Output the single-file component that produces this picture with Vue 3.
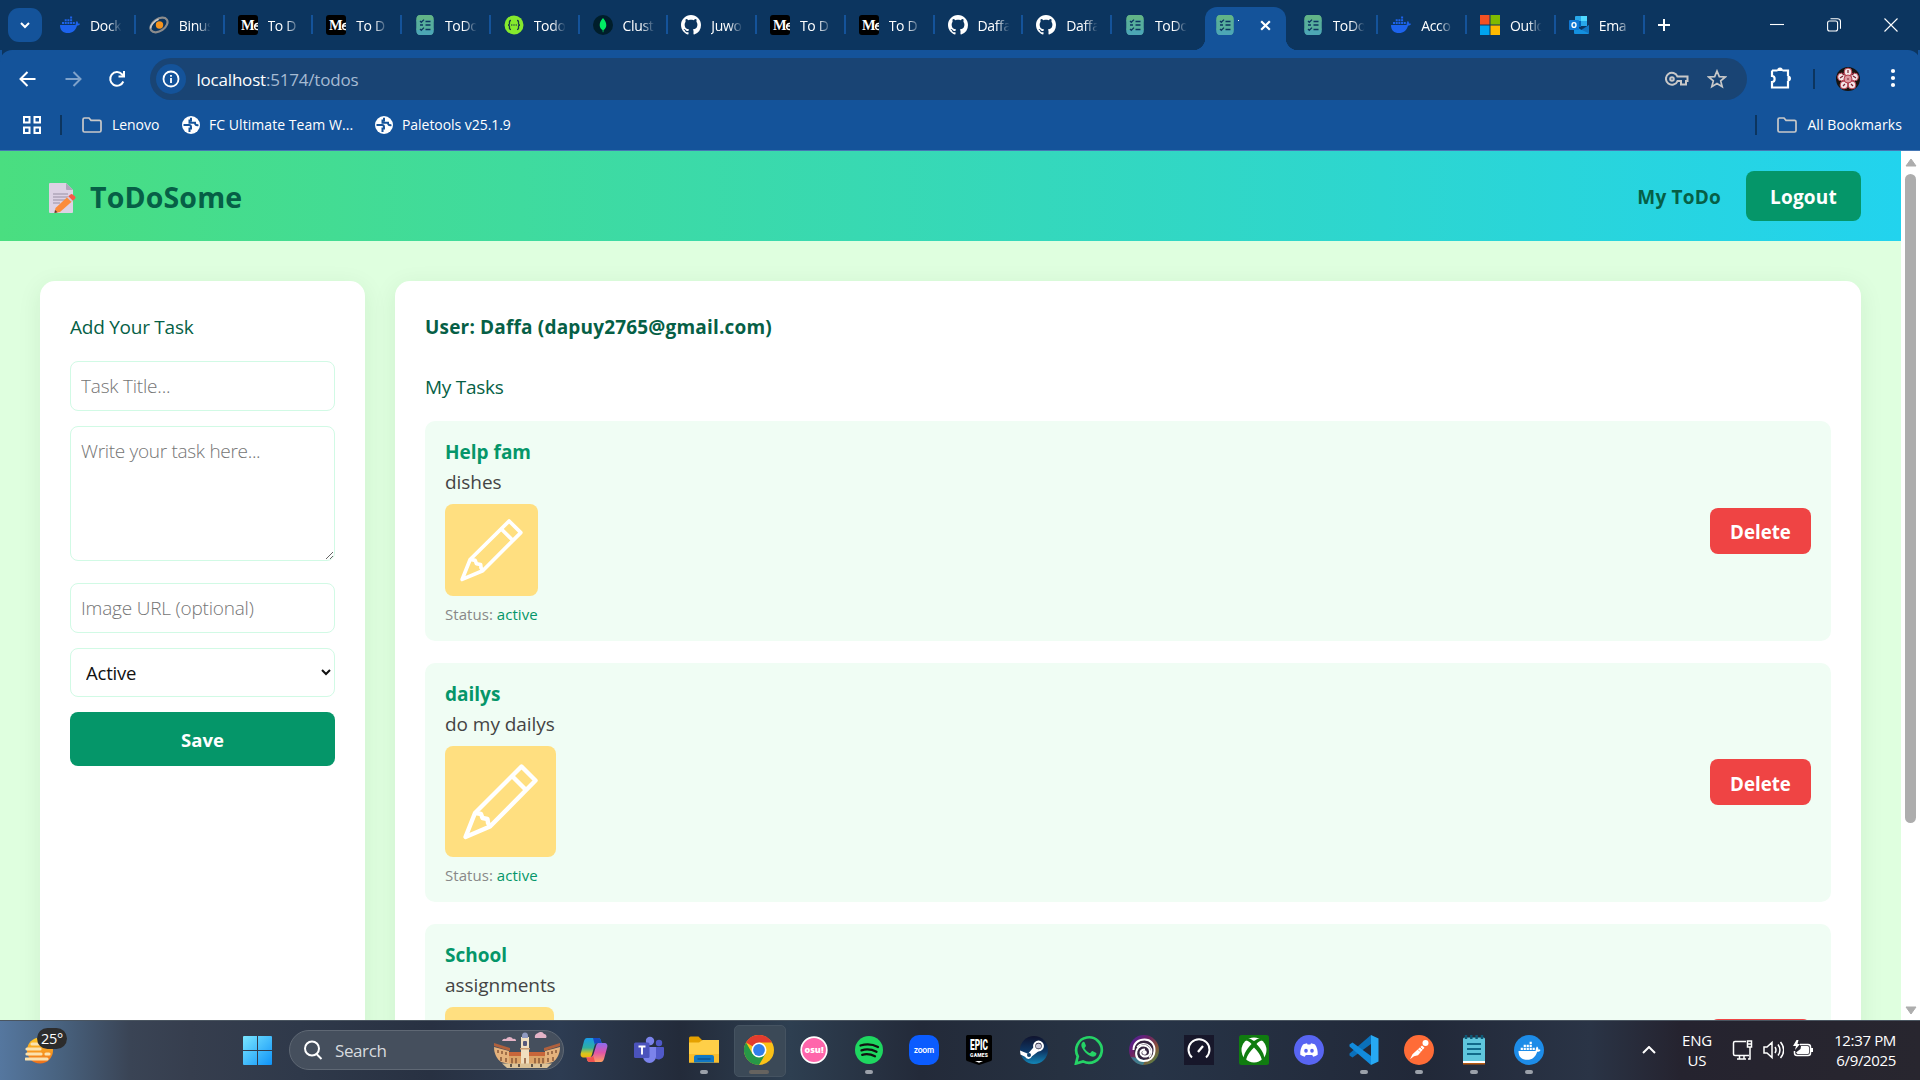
<script setup>
const checklist = '<rect x="1.5" y="0" width="17" height="20" rx="4" fill="#5aae94"/><rect x="1.5" y="0" width="17" height="9" rx="4" fill="#62b487"/><rect x="1.5" y="11" width="17" height="9" rx="4" fill="#4da7b5"/><rect x="1.5" y="5" width="17" height="10" fill="#57ae9d"/><path d="M5 6l1.3 1.3L9 4.6M5 14l1.3 1.3L9 12.6M10.5 6.5h5M10.5 10h5M5 10h3M10.5 14.5h5" fill="none" stroke="#0d3560" stroke-width="1.3"/>'
const whale = '<path d="M0 10h15.600c0-2 .6-3.200 1.200-4 1 .7 1.300 1.600 1.200 2.600.8-.1 1.600 0 2 .4-.6 1.300-1.700 1.700-3 1.700C15.500 15.500 12.500 18 8 18c-5 0-8-2.400-8-8z"/><path d="M2 7h2v2H2zM4.700 7h2v2h-2zM7.400 7h2v2h-2zM10.100 7h2v2h-2zM12.800 7h2v2h-2zM4.700 4.300h2v2h-2zM7.400 4.300h2v2h-2zM10.100 4.300h2v2h-2zM10.100 1.600h2v2h-2z"/>'
const octocat = '<path fill="#fff" transform="scale(1.25)" d="M8 0C3.580 0 0 3.580 0 8c0 3.540 2.290 6.530 5.470 7.590.4.070.55-.17.55-.38 0-.19-.01-.82-.01-1.490-2.010.37-2.530-.49-2.690-.94-.09-.23-.48-.94-.82-1.130-.28-.15-.68-.52-.01-.53.63-.01 1.080.58 1.230.82.72 1.210 1.870.87 2.330.66.070-.52.28-.87.51-1.070-1.780-.2-3.640-.89-3.640-3.950 0-.87.31-1.590.82-2.150-.08-.2-.36-1.020.080-2.120 0 0 .67-.21 2.200.82.64-.18 1.320-.27 2-.27s1.360.09 2 .27c1.530-1.040 2.200-.82 2.200-.82.44 1.100.16 1.920.080 2.120.51.56.82 1.270.82 2.150 0 3.070-1.870 3.750-3.650 3.950.29.25.54.73.54 1.480 0 1.070-.01 1.930-.01 2.200 0 .21.15.46.55.38A8.010 8.010 0 0 0 16 8c0-4.420-3.580-8-8-8z"/>'
const medium = '<rect width="20" height="20" rx="3" fill="#000"/><text x="3" y="15" font-family="Liberation Serif, serif" font-weight="bold" font-size="14.500" fill="#fff">M</text><path d="M20 8.500c-4-1-5 6.500 0 6M16.500 11h3.500" stroke="#fff" stroke-width="1.500" fill="none"/>'
const blueWhale = `<g fill="#1d63ed">${whale}</g>`

const tabs = [
  { t: 'Dock', i: blueWhale },
  { t: 'Binus', i: '<g transform="rotate(-35 10 10)"><ellipse cx="10" cy="10" rx="9.500" ry="6" fill="none" stroke="#8c8c8c" stroke-width="2.200"/><path d="M1 8a9.500 6 0 0 1 12-3" fill="none" stroke="#c9c9c9" stroke-width="1.500"/></g><circle cx="10.500" cy="10" r="3.700" fill="#f7941d"/>' },
  { t: 'To D', i: medium },
  { t: 'To D', i: medium },
  { t: 'ToDo', i: checklist },
  { t: 'Todo', i: '<circle cx="10" cy="10" r="9.500" fill="#85ea2d"/><path d="M7 5.500c-2 0-1.500 1.500-1.500 3 0 1-.7 1.500-1.500 1.500.8 0 1.500.5 1.500 1.500 0 1.500-.5 3 1.500 3M13 5.500c2 0 1.500 1.500 1.500 3 0 1 .7 1.500 1.500 1.500-.8 0-1.500.5-1.500 1.500 0 1.500.5 3-1.500 3M7.300 10h1M9.500 10h1M11.700 10h1" fill="none" stroke="#173647" stroke-width="1.300"/>' },
  { t: 'Clust', i: '<circle cx="10" cy="10" r="10" fill="#001e2b"/><path d="M10 3c-2.500 3-3.300 4.800-3.300 7.200 0 2.300 1.300 3.800 2.900 4.800l.2 2.200h.5l.2-2.200c1.600-1 2.800-2.600 2.800-4.800C13.300 7.800 12.400 6 10 3z" fill="#00ed64"/>' },
  { t: 'Juwo', i: octocat },
  { t: 'To D', i: medium },
  { t: 'To D', i: medium },
  { t: 'Daffa', i: octocat },
  { t: 'Daffa', i: octocat },
  { t: 'ToDo', i: checklist },
  { t: '', i: checklist, active: true },
  { t: 'ToDo', i: checklist },
  { t: 'Acco', i: blueWhale },
  { t: 'Outlo', i: '<path fill="#f25022" d="M0 0h9.500v9.500H0z"/><path fill="#7fba00" d="M10.500 0H20v9.500h-9.500z"/><path fill="#00a4ef" d="M0 10.500h9.500V20H0z"/><path fill="#ffb900" d="M10.500 10.500H20V20h-9.500z"/>' },
  { t: 'Ema', i: '<path fill="#28a8ea" d="M7 1h10a1 1 0 0 1 1 1v9H6V2a1 1 0 0 1 1-1z"/><path fill="#0364b8" d="M6 6h6v6H6z"/><path fill="#50d9ff" d="M12 1h6v5h-6z"/><path fill="#1490df" d="M5 10l7.500 5L20 10v8a1 1 0 0 1-1 1H6a1 1 0 0 1-1-1z"/><path fill="#0f5ba5" d="M12 14.500L20 10v8.500z" opacity=".5"/><rect y="5" width="10" height="10" rx="1" fill="#0f78d4"/><ellipse cx="5" cy="10" rx="2" ry="2.400" fill="none" stroke="#fff" stroke-width="1.400"/>' },
]

const tasks = [
  { title: 'Help fam', text: 'dishes', w: 93, h: 92 },
  { title: 'dailys', text: 'do my dailys', w: 111, h: 111 },
  { title: 'School', text: 'assignments', w: 109, h: 109 },
]

const apps = [
  { n: 'copilot', i: '<defs><linearGradient id="ca" x1="0" y1="0" x2="0" y2="1"><stop offset="0" stop-color="#199be8"/><stop offset=".5" stop-color="#2fb0a0"/><stop offset=".8" stop-color="#d9c51c"/><stop offset="1" stop-color="#f2b012"/></linearGradient><linearGradient id="cb" x1="0" y1="0" x2="0" y2="1"><stop offset="0" stop-color="#8a6cf0"/><stop offset=".5" stop-color="#e055a8"/><stop offset="1" stop-color="#ff9f60"/></linearGradient></defs><path d="M8 3h11c2 0 2.500 1.200 3 3l.6 2H19c-2 0-3 1-3.600 3l-2.600 9c-.6 2-1.500 2.500-3 2.500H5c-3 0-4-2-3-5L5 6c.7-2 1.500-3 3-3z" fill="url(#ca)"/><path d="M14 3h5c2 0 2.500 1.200 3 3l.6 2H19c-1.500 0-2.500.6-3.200 1.800z" fill="#1749c4"/><path d="M22 27H11c-2 0-2.600-1-3-2.500L7.500 22H11c2 0 3-1 3.600-3l2.600-8.500c.6-2 1.500-2.500 3-2.500H25c3 0 4 2 3 5l-3 11c-.7 2-1.500 3-3 3z" fill="url(#cb)"/><path d="M7.500 22.500H11c1.600 0 2.600-.8 3.200-2L16 27h-5c-2 0-2.600-1-3-2.500z" fill="#ef5350"/>' },
  { n: 'teams', i: '<circle cx="16" cy="6" r="4.200" fill="#7b83eb"/><circle cx="25" cy="8" r="3.200" fill="#5059c9"/><path d="M20 12h9a1 1 0 0 1 1 1v6.500a5.500 5.500 0 0 1-10 2.500z" fill="#5059c9"/><path d="M9 12h13v9.500a6.500 6.500 0 0 1-13 0z" fill="#7b83eb"/><rect x="0" y="7.500" width="15.500" height="15.500" rx="1.500" fill="#4b53bc"/><path d="M4.500 11.500h7M8 11.500V19.500" stroke="#fff" stroke-width="1.900"/>' },
  { n: 'explorer', dot: true, i: '<path d="M0 3a1.500 1.500 0 0 1 1.500-1.500h8L13 5v6H0z" fill="#e5a100"/><path d="M0 7.500h10L13.500 5H30v22.500H0z" fill="#ffcf48"/><path d="M0 19h30v8.500H0z" fill="#f8bd2c"/><path d="M5 27.500V22a2 2 0 0 1 2-2h16a2 2 0 0 1 2 2v5.500z" fill="#1178c4"/><path d="M8.500 24h13" stroke="#0b4a86" stroke-width="1.200"/>' },
  { n: 'chrome', on: true, i: '<circle cx="15" cy="15" r="15" fill="#fbc117"/><path d="M15 15L2 7.500A15 15 0 0 1 28 7.500H15z" fill="#e33b2e"/><path d="M2 7.500A15 15 0 0 0 15 30l6.500-11.200L15 15 8.500 18.700z" fill="#279847"/><circle cx="15" cy="15" r="7.500" fill="#fff"/><circle cx="15" cy="15" r="5.900" fill="#327ee9"/>' },
  { n: 'osu', i: '<circle cx="15" cy="15" r="12.800" fill="#ff66ab" stroke="#fff" stroke-width="1.700"/><text x="15" y="18" text-anchor="middle" font-family="Open Sans, sans-serif" font-weight="800" font-size="9" fill="#fff">osu!</text>' },
  { n: 'spotify', dot: true, i: '<circle cx="15" cy="15" r="14" fill="#1ed760"/><path d="M6.500 10.500c6-1.800 12.500-1.200 17.500 1.500M7.500 15.300c5-1.500 10.500-.8 15 1.500M8.200 19.800c4.500-1.200 8.800-.6 12.800 1.500" fill="none" stroke="#111" stroke-width="2.300" stroke-linecap="round"/>' },
  { n: 'zoom', i: '<rect width="30" height="30" rx="10" fill="#0b5cff"/><text x="15" y="17.500" text-anchor="middle" font-family="Lato, sans-serif" font-weight="bold" font-size="8.500" letter-spacing="-.2" fill="#fff">zoom</text>' },
  { n: 'epic', i: '<path d="M2 1.500A1.500 1.500 0 0 1 3.500 0h23A1.500 1.500 0 0 1 28 1.500V24a2 2 0 0 1-1 2l-12 4-12-4a2 2 0 0 1-1-2z" fill="#000"/><text x="15" y="15" text-anchor="middle" textLength="18" lengthAdjust="spacingAndGlyphs" font-family="Roboto, sans-serif" font-weight="900" font-size="15" fill="#fff">EPIC</text><text x="15" y="22" text-anchor="middle" textLength="18" font-family="Roboto, sans-serif" font-weight="900" font-size="5" fill="#fff">GAMES</text><path d="M11 26h8l-4 1.700z" fill="#fff"/>' },
  { n: 'steam', i: '<defs><linearGradient id="st" x1="0" y1="0" x2="0" y2="1"><stop offset="0" stop-color="#10132e"/><stop offset=".55" stop-color="#0e3866"/><stop offset="1" stop-color="#1387b8"/></linearGradient></defs><circle cx="15" cy="15" r="14" fill="url(#st)"/><circle cx="19.500" cy="11" r="4.300" fill="#10132e" stroke="#fff" stroke-width="2.300"/><circle cx="19.500" cy="11" r="2.600" fill="#ccd"/><path d="M1 15.500l8 3.300 6-7 4.500 4.500-6.500 5a3.800 3.800 0 0 1-7 .5L1.500 19.500z" fill="#fff"/><circle cx="10" cy="20" r="2" fill="#10406c"/>' },
  { n: 'whatsapp', i: '<path d="M1.500 28.500V15A13.500 13.500 0 1 1 15 28.500z" fill="none"/><path d="M2 28.500l1.800-7.200A12.800 12.800 0 1 1 9 26.400z" fill="none" stroke="#25d366" stroke-width="2.700"/><path d="M10.700 7.500c-.5-1-1.200-.8-1.800-.5-1.700 1.200-2 3.300-1 5.500 1.800 4 5 7.300 9 8.800 2.500.9 5 .2 5.500-2.300.1-.8 0-1-.5-1.300l-3-1.500c-.7-.3-1-.1-1.400.4l-1 1.200c-.4.4-.7.400-1.200.1-2-.9-3.600-2.400-4.700-4.300-.3-.5-.1-.8.3-1.200l.8-1c.3-.4.300-.8.100-1.200z" fill="#25d366"/>' },
  { n: 'ubisoft', i: '<defs><linearGradient id="ub" x1="0" y1="0" x2="1" y2="1"><stop offset="0" stop-color="#4a22a8"/><stop offset=".35" stop-color="#6b2068"/><stop offset=".65" stop-color="#8a5038"/><stop offset="1" stop-color="#3f9a4c"/></linearGradient></defs><circle cx="15" cy="15" r="15" fill="url(#ub)"/><path d="M2 22a15 15 0 0 0 12 8l3-6z" fill="#2f8aa0" opacity=".8"/><circle cx="15" cy="15" r="10" fill="#35253f"/><path d="M4.500 15C4.500 8 9.500 4.500 15.500 4.500S26 9 25.500 16 20 26 14.500 26 6 21 7.500 16 14 9 18 11.500s4 8 .5 9.500-7-.5-7-3 2-3.500 4.500-3.500" fill="none" stroke="#fff" stroke-width="2"/><path d="M8 12c3-4 9-4.500 12.500-1S23 20 20 22.500" fill="none" stroke="#fff" stroke-width="1.300"/><circle cx="15.500" cy="17.500" r="2.300" fill="#fff"/>' },
  { n: 'speedtest', i: '<path d="M0 0h30v30H0z" fill="#17172a"/><path d="M8 22.500A10.500 10.500 0 1 1 22 22.500" fill="none" stroke="#fff" stroke-width="2"/><path d="M19 11l-5 6" stroke="#fff" stroke-width="2.300"/>' },
  { n: 'xbox', i: '<rect width="30" height="30" rx="2.500" fill="#107c10"/><circle cx="15" cy="15" r="12.500" fill="#fff"/><path d="M8 3.500c2.500-.5 5 1 7 2.500 2-1.500 4.500-3 7-2.500l2 2c-2-.5-4.500 1-6.500 3.500 5 5 8.500 11 7.500 15l-2 1.500C22 20 18 15.500 15 12.500 12 15.500 8 20 7 25.500L5 24c-1-4 2.500-10 7.500-15C10.500 6.500 8 5 6 5.500z" fill="#107c10"/>' },
  { n: 'discord', i: '<circle cx="15" cy="15" r="15" fill="#5865f2"/><path d="M9 9.500c1.500-.8 3-1.200 4-1.300l.6 1.200h2.800l.6-1.200c1 .1 2.500.5 4 1.300 2 3 3 6.500 2.700 10.200-1.500 1.100-3 1.800-4.500 2.100l-1-1.800H11.800l-1 1.800c-1.500-.3-3-1-4.500-2.100C6 16 7 12.500 9 9.500z" fill="#fff"/><ellipse cx="12" cy="15.700" rx="1.800" ry="2" fill="#5865f2"/><ellipse cx="18" cy="15.700" rx="1.800" ry="2" fill="#5865f2"/>' },
  { n: 'vscode', dot: true, i: '<path d="M22 0L29.500 3.500v23L22 30z" fill="#27a9f3"/><path d="M22 0v9L3.500 22.500.500 20.500v-2z" fill="#0a70bb"/><path d="M22 30v-9L3.500 7.500.500 9.500v2z" fill="#128bdc"/>' },
  { n: 'postman', dot: true, i: '<circle cx="15" cy="15" r="15" fill="#ff6c37"/><circle cx="21.500" cy="8" r="3" fill="#fff"/><path d="M18 10.500l2.500 2.200-6.500 7.500-4 1-4 3 2.500-5z" fill="#fff"/><path d="M16 12l2.500 2.500M14 14.500l2 2" stroke="#ff6c37" stroke-width=".8"/>' },
  { n: 'notepad', dot: true, i: '<rect x="4" y="2.500" width="22" height="26" rx="1.500" fill="#5fc6dc"/><path d="M4 26h22v2H4z" fill="#fff"/><path d="M4 28h22v1.500H4z" fill="#b85a10"/><path d="M7 0v4M12.300 0v4M17.600 0v4M23 0v4" stroke="#0e5a77" stroke-width="2.400"/><path d="M8 9h14M8 14h14M8 19h14" stroke="#116a8a" stroke-width="2"/>' },
  { n: 'docker', dot: true, i: `<circle cx="15" cy="15" r="15" fill="#1d8ce8"/><g fill="#fff" transform="translate(4.500 5) scale(1.100)">${whale}</g>` },
]
</script>

<template>
  <div class="screen">
    <div class="strip">
      <div class="search-tabs"><svg width="14" height="14" viewBox="0 0 14 14"><path d="M3 5l4 4 4-4" /></svg></div>
      <div v-for="(t, k) in tabs" :key="k" class="tab" :class="{ active: t.active, before: k === 12 }">
        <svg class="fav" viewBox="0 0 20 20" v-html="t.i"></svg>
        <span class="label">{{ t.t }}</span>
        <svg v-if="t.active" class="x" viewBox="0 0 12 12"><path d="M2 2l8 8M10 2l-8 8" /></svg>
      </div>
      <svg class="plus" viewBox="0 0 14 14"><path d="M7 1v12M1 7h12" /></svg>
      <div class="wctl">
        <svg width="14" height="14" viewBox="0 0 14 14"><path d="M0 6.500h14" /></svg>
        <svg width="14" height="14" viewBox="0 0 14 14"><rect x=".6" y="3" width="10" height="10" rx="2" /><path d="M3.500.7h7a3 3 0 0 1 3 3v7" /></svg>
        <svg width="14" height="14" viewBox="0 0 14 14"><path d="M.5.5l13 13M13.500.5l-13 13" /></svg>
      </div>
    </div>

    <div class="toolbar">
      <svg class="nav" viewBox="0 0 20 20"><path d="M17.500 10h-15M9.500 3l-7 7 7 7" /></svg>
      <svg class="nav dim" viewBox="0 0 20 20"><path d="M2.500 10h15M10.500 3l7 7-7 7" /></svg>
      <svg class="nav" viewBox="0 0 20 20"><path d="M16.300 12.500A6.800 6.800 0 1 1 15 5.300L17 7M17 2v5.500h-5.500" /></svg>
      <div class="omnibox">
        <span class="info"><svg width="20" height="20" viewBox="0 0 20 20"><circle cx="10" cy="10" r="7.500" /><path d="M10 9v5M10 6v1.700" /></svg></span>
        <span class="url">localhost<i>:5174/todos</i></span>
        <svg class="key" viewBox="0 0 24 16"><path d="M12.500 5.500A6 6 0 1 0 12.500 10H16v3.500h5V10h1.500V5.500z" /><circle cx="7" cy="8" r="1.800" /></svg>
        <svg class="star" viewBox="0 0 20 20"><path d="M10 2l2.300 5.600 6 .4-4.600 3.900 1.500 5.900L10 14.600l-5.200 3.200 1.500-5.900L1.700 8l6-.4z" /></svg>
      </div>
      <svg class="puzzle" viewBox="0 0 24 24"><path d="M3 4.500h5.500M13.500 4.500H19V10M19 15v6.500H3V16c3.500 0 3.500-6 0-6V4.500" /><path class="solid" d="M8 5a3 3.500 0 0 1 6 0zM18.500 9.500a3.500 3 0 0 1 0 6z" /></svg>
      <span class="vr"></span>
      <svg class="avatar" viewBox="0 0 24 24"><circle cx="12" cy="12" r="12" fill="#17130f" /><g fill="#f3e6e8" stroke="#b5404e" stroke-width="1"><circle cx="12" cy="5" r="3.900" /><circle cx="18.500" cy="10" r="3.900" /><circle cx="16" cy="18" r="3.900" /><circle cx="8" cy="18" r="3.900" /><circle cx="5.500" cy="10" r="3.900" /><circle cx="12" cy="12" r="4" fill="#dc9aa2" /></g><path d="M12 3v3M17 9l3 2M4 11l3-2M7 19l2-2M15 17l2 2M11 12h2M6 6l2 2M18 6l-2 2" stroke="#7b2030" stroke-width="1.200" /></svg>
      <svg class="dots" viewBox="0 0 6 24"><circle cx="3" cy="4" r="2.100" /><circle cx="3" cy="11" r="2.100" /><circle cx="3" cy="18" r="2.100" /></svg>
    </div>

    <div class="bookmarks">
      <svg class="grid" viewBox="0 0 18 18"><path d="M1 1h5.500v5.500H1zM11.500 1H17v5.500h-5.500zM1 11.500h5.500V17H1zM11.500 11.500H17V17h-5.500z" /></svg>
      <span class="vr a"></span>
      <svg class="folder" viewBox="0 0 20 16"><path d="M1 13.500v-11A1.500 1.500 0 0 1 2.500 1H7l2 2.300h8.500A1.500 1.500 0 0 1 19 4.800v8.700a1.500 1.500 0 0 1-1.500 1.500h-15A1.500 1.500 0 0 1 1 13.500z" /></svg>
      <span class="bm b1">Lenovo</span>
      <svg class="globe" viewBox="0 0 18 18"><circle cx="9" cy="9" r="9" /><path d="M1.500 9H7q2 0 2 2v1.500H7.500V16M9 1.800v2.700H7.500v2.300h5.500q0 3 3.400 2.200" /></svg>
      <span class="bm b2">FC Ultimate Team W...</span>
      <svg class="globe" viewBox="0 0 18 18"><circle cx="9" cy="9" r="9" /><path d="M1.500 9H7q2 0 2 2v1.500H7.500V16M9 1.800v2.700H7.500v2.300h5.500q0 3 3.400 2.200" /></svg>
      <span class="bm">Paletools v25.1.9</span>
      <span class="vr b"></span>
      <svg class="folder" viewBox="0 0 20 16"><path d="M1 13.500v-11A1.500 1.500 0 0 1 2.500 1H7l2 2.300h8.500A1.500 1.500 0 0 1 19 4.800v8.700a1.500 1.500 0 0 1-1.500 1.500h-15A1.500 1.500 0 0 1 1 13.500z" /></svg>
      <span class="bm all">All Bookmarks</span>
    </div>

    <div class="viewport">
      <div class="page">
        <header class="head">
          <svg class="memo" viewBox="0 0 27 30"><path d="M0 1a1 1 0 0 1 1-1h16l7 7v22a1 1 0 0 1-1 1H1a1 1 0 0 1-1-1z" fill="#ddd2e4" /><path d="M17 0l7 7h-6a1 1 0 0 1-1-1z" fill="#b3a6bd" /><path d="M4 11h15M4 14h15M4 17h12M4 20h7" stroke="#998fa3" stroke-width="1.100" /><path d="M5.500 30l1-5L19 13.500l4.500 4.500L11 29z" fill="#fb8b3b" /><path d="M19 13.500l4.500 4.500 2.500-2.300c1-1 .7-1.500-.2-2.500L24 11.700c-1-1-1.700-1-2.500-.3z" fill="#f65a45" /><path d="M18 14.500l4.500 4.500 1.300-1.200-4.500-4.500z" fill="#d6c7d8" /><path d="M5.500 30l.5-3 2.500 2.300z" fill="#5b3a3a" /></svg>
          <h1>ToDoSome</h1>
          <a class="mytodo">My ToDo</a>
          <button class="logout">Logout</button>
        </header>
        <main class="cols">
          <section class="card form">
            <p class="h add">Add Your Task</p>
            <input class="field" placeholder="Task Title..." />
            <textarea class="field area" placeholder="Write your task here..."></textarea>
            <input class="field" placeholder="Image URL (optional)" />
            <select class="field sel"><option>Active</option></select>
            <button class="save">Save</button>
          </section>
          <section class="card list">
            <p class="h user">User: Daffa (dapuy2765@gmail.com)</p>
            <p class="h mine">My Tasks</p>
            <article v-for="t in tasks" :key="t.title" class="task">
              <div class="body">
                <strong>{{ t.title }}</strong>
                <p class="desc">{{ t.text }}</p>
                <svg class="pic" :style="{ width: t.w + 'px', height: t.h + 'px' }" viewBox="0 0 111 111" preserveAspectRatio="none">
                  <rect width="111" height="111" fill="#ffdf80" />
                  <g fill="none" stroke="#fff" stroke-width="4.400" stroke-linejoin="round" stroke-linecap="round">
                    <path d="M20.500 91L30 67 76.500 20.500 90.500 34.500 45 80.500z" /><path d="M67.500 30.500L80.500 43.500" /><path d="M31 67l5 1 1.500 4 5 1 .500 4 2 3" />
                  </g>
                </svg>
                <p class="status">Status: <em>active</em></p>
              </div>
              <button class="del">Delete</button>
            </article>
          </section>
        </main>
      </div>
      <div class="sbar">
        <svg width="12" height="9" viewBox="0 0 12 9"><path d="M6 1L11 8H1z" /></svg>
        <div class="thumb"></div>
        <svg class="down" width="12" height="9" viewBox="0 0 12 9"><path d="M6 8L11 1H1z" /></svg>
      </div>
    </div>

    <footer class="taskbar">
      <div class="weather">
        <svg width="30" height="30" viewBox="0 0 30 30"><defs><linearGradient id="sun" x1="0" y1="0" x2="0" y2="1"><stop offset="0" stop-color="#ffc928" /><stop offset="1" stop-color="#f0701a" /></linearGradient></defs><circle cx="15" cy="14.500" r="13" fill="url(#sun)" /><path d="M7 8h7M2 13h13M2 18h14M21 18h3M1 23h21" stroke="#fbe2ae" stroke-width="3.200" stroke-linecap="round" /></svg>
        <span class="badge">25°</span>
      </div>
      <svg class="start" viewBox="0 0 29 29"><defs><linearGradient id="win" x1="0" y1="0" x2="1" y2="1"><stop offset="0" stop-color="#7ae6ff" /><stop offset="1" stop-color="#0f93f8" /></linearGradient></defs><path d="M1 0h13v14H0V1a1 1 0 0 1 1-1zM15 0h13a1 1 0 0 1 1 1v13H15zM0 15h14v14H1a1 1 0 0 1-1-1zM15 15h14v13a1 1 0 0 1-1 1H15z" fill="url(#win)" /></svg>
      <div class="search">
        <svg width="20" height="20" viewBox="0 0 20 20"><circle cx="9" cy="8.500" r="7" /><path d="M13.500 14l5 5" /></svg>
        <span>Search</span>
        <svg class="city" viewBox="0 0 66 38">
          <path d="M8 10a3 3 0 0 1 4-2 4 4 0 0 1 7 0 2 2 0 0 1 3 2zM41 7a4 4 0 0 1 3-5 4 4 0 0 1 6 1 2.500 2.500 0 0 1 2 4z" fill="#e3b3c6" />
          <path d="M0 16l15 4v13l-8-2C3 28 0 23 0 16z" fill="#e5b27c" /><path d="M66 16l-15 4v13l8-2c4-3 7-8 7-15z" fill="#e5b27c" />
          <path d="M0 12l16 5v3L0 15zM66 12l-16 5v3l16-5z" fill="#b0603c" />
          <path d="M15 23h36v10H15z" fill="#dca468" /><path d="M15 21h36v4H15z" fill="#c8663a" />
          <path d="M27 6h8v28h-8z" fill="#f0dfc0" /><path d="M28 5a3 3.500 0 0 1 6 0v2h-6z" fill="#8f99bf" /><path d="M26 17h10v1.500H26z" fill="#c79a70" /><rect x="29" y="10" width="4" height="5" rx="1" fill="#56597b" />
          <path d="M18 27v6M22 27v6M41 27v6M45 27v6M49 27v6M31 27v6M4 19v3M8 20v3M12 21v3M62 19v3M58 20v3M54 21v3M7 26v4M12 27v4M59 26v4M54 27v4" stroke="#8a5a38" stroke-width="1.500" />
          <path d="M8 32.500h50l-5 4.500H13z" fill="#dcc398" /><path d="M17 33v3M25 33v3M38 33v3M47 33v3" stroke="#3c3530" stroke-width="1.500" />
        </svg>
      </div>
      <div class="apps">
        <div v-for="a in apps" :key="a.n" class="app" :class="{ on: a.on, dot: a.dot }">
          <svg width="30" height="30" viewBox="0 0 30 30" v-html="a.i"></svg>
        </div>
      </div>
      <div class="tray">
        <svg class="chev" width="14" height="8" viewBox="0 0 14 8"><path d="M1 7l6-6 6 6" /></svg>
        <div class="lang">ENG<br />US</div>
        <svg class="net" width="22" height="22" viewBox="0 0 22 22"><path d="M14 2.500H3A1.500 1.500 0 0 0 1.500 4v11A1.500 1.500 0 0 0 3 16.500h14M5 20h9M7.500 17v3M12 17v3M15.500 2h4v6h-4zM15.500 5h4M18 8v12h-2" /></svg>
        <svg class="vol" width="22" height="22" viewBox="0 0 22 22"><path d="M2 8h3l5-4.500v15L5 14H2zM13 8c1.300 2 1.300 4 0 6M16 5.500c2.500 3.500 2.500 7.500 0 11M18.500 3c4 5 4 11 0 16" /></svg>
        <svg class="bat" width="22" height="22" viewBox="0 0 22 22"><path d="M8 5.500h8A2.500 2.500 0 0 1 18.500 8v6a2.500 2.500 0 0 1-2.500 2.500H5A2.500 2.500 0 0 1 2.500 14v-2" /><path class="fill" d="M9 7h6.500A1.500 1.500 0 0 1 17 8.500v5a1.500 1.500 0 0 1-1.500 1.500h-10L4 13.500 8.500 10zM19 9h2v4h-2zM4.500 1L1 7h3l-1 4 5-6H5.500l1-4z" /></svg>
        <div class="clock">12:37 PM<br />6/9/2025</div>
      </div>
    </footer>
  </div>
</template>

<style>
body { overflow: hidden; }
</style>

<style scoped>
* { box-sizing: border-box; }
svg { display: block; flex: none; fill: none; }
p, h1 { margin: 0; }
.screen { width: 1920px; height: 1080px; display: flex; flex-direction: column; overflow: hidden; font-family: "Open Sans", "Noto Sans", sans-serif; background: #14539a; }

.strip { height: 50px; flex: none; display: flex; align-items: center; background: #0c355f; position: relative; z-index: 1; }
.search-tabs { width: 34px; height: 34px; margin: 0 5px 0 8px; border-radius: 11px; background: #14539a; display: flex; align-items: center; justify-content: center; flex: none; }
.search-tabs path, .x path, .plus path { stroke: #fff; stroke-width: 2; }
.tab { width: 88.760px; height: 50px; flex: none; display: flex; align-items: center; padding-left: 13px; position: relative; }
.tab::after { content: ""; position: absolute; right: 0; top: 15px; width: 2px; height: 19px; background: #14539a; }
.tab.before::after, .tab.active::after { display: none; }
.fav { width: 20px; height: 20px; }
.label { width: 33px; margin-left: 10px; white-space: nowrap; font-size: 14px; letter-spacing: -.35px; color: #fff; mask-image: linear-gradient(90deg, #000 55%, transparent 96%); }
.tab.active { height: 43px; align-self: flex-end; background: #14539a; border-radius: 12px 12px 0 0; width: 81px; margin: 0 3.760px 0 4px; padding: 0 0 7px 10px; }
.tab.active::before { content: ""; position: absolute; left: -12px; right: -12px; bottom: 0; height: 12px; background: radial-gradient(circle at 0 0, transparent 12px, #14539a 12.500px) left / 12px 12px no-repeat, radial-gradient(circle at 100% 0, transparent 12px, #14539a 12.500px) right / 12px 12px no-repeat; }
.tab.active .label { width: 1px; height: 1px; margin: -10px 0 0 3px; background: #fff; mask-image: none; }
.tab.active .x { width: 13px; height: 13px; margin-left: 20px; }
.plus { width: 14px; height: 14px; margin-left: 12px; }
.wctl { margin-left: auto; margin-right: 22px; display: flex; gap: 43px; }
.wctl svg { stroke: #fff; stroke-width: 1.100; }

.toolbar { height: 54px; flex: none; display: flex; align-items: center; background: #14539a; padding: 4px 0 0 18px; border-radius: 12px 12px 0 0; box-shadow: 0 -14px 0 -2px #0c355f; }
.nav { width: 20px; height: 20px; margin-right: 25px; stroke: #fff; stroke-width: 2; }
.nav.dim { stroke: #7fa2ca; margin-right: 24px; }
.nav:nth-child(3) { margin-right: 23px; }
.omnibox { width: 1597px; height: 42px; border-radius: 21px; background: #194474; display: flex; align-items: center; padding-left: 6px; }
.info { width: 30px; height: 30px; border-radius: 50%; background: #14539a; display: flex; align-items: center; justify-content: center; }
.info svg { stroke: #fff; stroke-width: 1.800; }
.url { margin-left: 10.500px; font-size: 17px; letter-spacing: -.2px; color: #fff; }
.url i { font-style: normal; color: #a6bbd3; }
.key { width: 24px; height: 16px; margin-left: auto; stroke: #c8c8c8; stroke-width: 2; }
.star { width: 20px; height: 20px; margin: 0 20px 0 18px; stroke: #c8c8c8; stroke-width: 1.700; }
.puzzle { width: 24px; height: 24px; margin: -2px 0 0 22px; stroke: #fff; stroke-width: 2.200; }
.puzzle .solid { fill: #fff; stroke: none; }
.vr { width: 2px; height: 20px; background: #0c355f; flex: none; }
.toolbar .vr { margin-left: 20px; }
.avatar { width: 24px; height: 24px; margin-left: 21px; }
.dots { width: 6px; height: 24px; margin-left: 30px; fill: #fff; }

.bookmarks { height: 47px; flex: none; display: flex; align-items: center; border-bottom: 1px solid #4577b5; padding: 0 18px 5px 23px; }
.grid { width: 18px; height: 18px; stroke: #fff; stroke-width: 2; }
.vr.a { margin: 0 20px 0 19px; }
.folder { width: 20px; height: 16px; stroke: #c9c9c9; stroke-width: 1.700; }
.bm { font-size: 14px; letter-spacing: -.05px; color: #fff; white-space: nowrap; margin-left: 9px; }
.b1 { margin: 0 22px 0 10px; width: 48px; }
.b2 { width: 145px; margin-right: 21px; letter-spacing: .05px; }
.globe { width: 18px; height: 18px; }
.globe circle { fill: #fff; }
.globe path { stroke: #14539a; stroke-width: 2; }
.vr.b { margin: 0 20px 0 auto; }
.all { margin-left: 10px; letter-spacing: .1px; }

.viewport { height: 869px; flex: none; display: flex; background: #fff; }
.page { width: 1901px; height: 869px; overflow: hidden; background: #dfffdf; }
.head { height: 90px; display: flex; align-items: center; padding: 0 40px 0 49px; background: linear-gradient(90deg, #4ade80, #22d3ee); color: #065f46; }
.memo { width: 27px; height: 30px; margin-top: 4px; }
h1 { font-size: 28.500px; font-weight: 700; margin-left: 14px; line-height: 40px; margin-top: 2px; letter-spacing: .15px; }
.mytodo { margin: 2px 25px 0 auto; font-size: 19px; font-weight: 700; letter-spacing: .2px; }
button { border: 0; font-family: inherit; font-weight: 700; font-size: 19px; color: #fff; padding: 0; }
.logout { width: 115px; height: 50px; padding-top: 2px; border-radius: 8px; background: #059669; letter-spacing: .2px; }
.cols { display: flex; gap: 30px; padding: 40px; height: 1000px; }
.card { background: #fff; border-radius: 15px; padding: 31px 30px 30px; box-shadow: 0 5px 25px rgba(0, 60, 0, .08); }
.form { width: 325px; display: flex; flex-direction: column; }
.list { flex: 1; }
.h { font-size: 19px; line-height: 30px; color: #065f46; white-space: nowrap; }
.form .h { margin-bottom: 19px; letter-spacing: -.25px; }
.user { font-weight: 700; letter-spacing: .18px; }
.mine { margin: 30px 0 19px; letter-spacing: -.25px; }
.field { display: block; width: 265px; height: 50px; flex: none; margin: 0 0 15px; border: 1px solid #d1fae5; border-radius: 8px; padding: 10px; font: 300 19px "Open Sans", sans-serif; letter-spacing: -.2px; background: #fff; color: #111; outline: none; }
.field::placeholder { color: #757575; }
.area { height: 135px; margin-bottom: 22px; line-height: 27px; padding-top: 11px; letter-spacing: -.3px; }
.sel { height: 49px; font-weight: 400; font-size: 18.500px; padding-left: 11px; padding-right: 8px; }
.save { height: 54px; border-radius: 8px; background: #059669; font-size: 18.500px; }
.task { display: flex; align-items: center; justify-content: space-between; background: #f0fdf4; border-radius: 10px; padding: 16px 20px 15px; margin-bottom: 22px; }
.task strong { display: block; font-size: 19px; line-height: 30px; color: #059669; }
.desc { font-size: 19px; line-height: 30px; color: #444; letter-spacing: -.05px; }
.pic { margin: 7px 0 6px; border-radius: 8px; }
.status { font-size: 15px; line-height: 24px; color: #888; letter-spacing: .05px; }
.status em { font-style: normal; color: #059669; }
.del { width: 101px; height: 46px; margin-top: -2px; padding-top: 2px; border-radius: 8px; background: #ef4444; font-size: 18.700px; }
.sbar { width: 19px; display: flex; flex-direction: column; align-items: center; padding-top: 7px; background: #fff; }
.sbar path { fill: #adadad; stroke: #adadad; stroke-linejoin: round; }
.thumb { width: 11px; height: 649px; margin-top: 7px; border-radius: 6px; background: #adadad; }
.sbar .down { margin-top: auto; margin-bottom: 5px; }

.taskbar { height: 60px; flex: none; display: flex; align-items: center; border-top: 1px solid #4a5560; padding-bottom: 1px; background: linear-gradient(90deg, #55779f 0, #48627f 60px, #3a4455 130px, #363e4e 190px, #2f394a 300px, #283142 430px, #2d3c52 560px, #232b3a 680px, #2e3f51 790px, #232a39 920px, #263141 1060px, #273447 1150px, #212838 1420px, #2a3446 1590px, #25232f 1680px, #28262f 1920px); color: #fff; }
.weather { width: 45px; margin-left: 25px; position: relative; height: 36px; padding-top: 6px; }
.weather > svg { margin-top: -2px; }
.badge { position: absolute; left: 12px; top: -4px; width: 30px; height: 21px; border-radius: 11px; background: #2c2c2c; font-size: 14.500px; line-height: 21px; text-align: center; letter-spacing: -.3px; }
.start { width: 29px; height: 29px; margin-left: 173px; }
.search { width: 275px; height: 40px; margin-left: 17px; border-radius: 20px; border: 1px solid #5f6874; background: #454f5d; display: flex; align-items: center; padding-left: 13px; font-size: 17px; letter-spacing: -.4px; color: #d8dbdf; }
.search > svg:first-child { stroke: #fff; stroke-width: 2; }
.search span { margin-left: 12px; }
.search .city { width: 66px; height: 38px; margin: 0 3px 0 auto; }
.apps { display: flex; margin-left: 2.500px; }
.app { width: 55px; height: 58px; display: flex; align-items: center; justify-content: center; position: relative; }
.app > svg { position: relative; }
.app.on::before { content: ""; position: absolute; left: 2px; top: 4px; width: 50px; height: 50px; border-radius: 5px; background: #3b4957; border: 1px solid #455361; }
.app.dot::after, .app.on::after { content: ""; position: absolute; bottom: 5px; width: 8px; height: 4px; border-radius: 2px; background: #9ba1aa; }
.app.on::after { width: 20px; background: #66635f; }
.tray { margin-left: auto; display: flex; align-items: center; padding-right: 24px; font-size: 15px; line-height: 20px; }
.tray svg { stroke: #fff; stroke-width: 1.500; }
.tray .chev { stroke-width: 2; margin-right: 23px; }
.lang { width: 36px; text-align: center; letter-spacing: -.2px; }
.net { margin-left: 17px; }
.vol { margin-left: 8px; }
.bat { margin-left: 8px; }
.bat .fill { fill: #fff; stroke: none; }
.clock { width: 70px; text-align: right; margin-left: 12px; letter-spacing: -.35px; white-space: nowrap; }
</style>
